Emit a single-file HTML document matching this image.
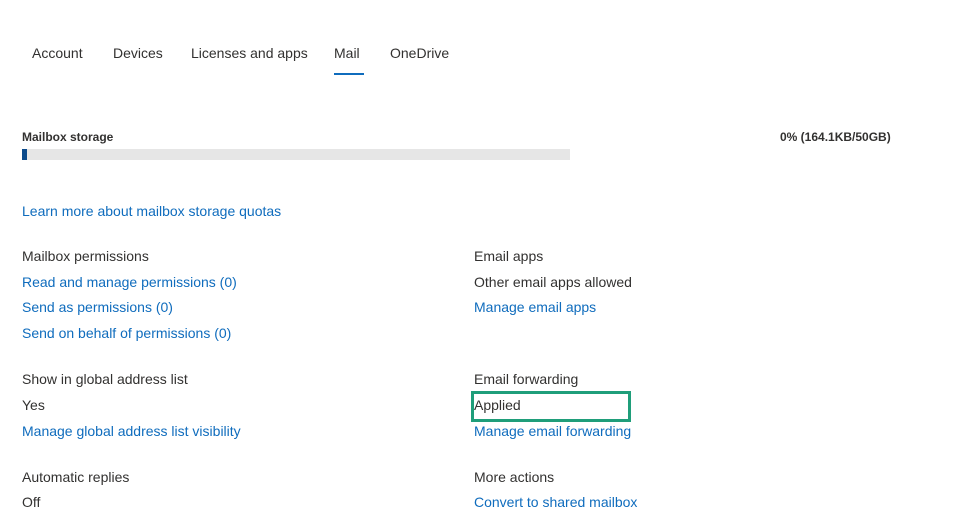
<!DOCTYPE html>
<html><head><style>
body{margin:0;width:964px;height:522px;background:#fff;position:relative;overflow:hidden;font-family:"Liberation Sans",sans-serif;font-size:14px;color:#323130}
.t{position:absolute;white-space:nowrap;line-height:18px}
.l{color:#0f6cbd}
.b{font-weight:bold;font-size:12px}
</style></head><body>
<div class="t" style="left:32px;top:44px">Account</div>
<div class="t" style="left:113px;top:44px">Devices</div>
<div class="t" style="left:191px;top:44px">Licenses and apps</div>
<div class="t" style="left:334px;top:44px">Mail</div>
<div class="t" style="left:390px;top:44px">OneDrive</div>
<div style="position:absolute;left:334px;top:73px;width:30px;height:2px;background:#0f6cbd"></div>
<div class="t b" style="left:22px;top:128px">Mailbox storage</div>
<div class="t b" style="left:780px;top:128px">0% (164.1KB/50GB)</div>
<div style="position:absolute;left:22px;top:149px;width:548px;height:11px;background:#e6e6e6"></div>
<div style="position:absolute;left:22px;top:149px;width:5px;height:11px;background:#0b4a8b"></div>
<div class="t l" style="left:22px;top:202px">Learn more about mailbox storage quotas</div>
<div class="t" style="left:22px;top:247px">Mailbox permissions</div>
<div class="t l" style="left:22px;top:273px">Read and manage permissions (0)</div>
<div class="t l" style="left:22px;top:298px">Send as permissions (0)</div>
<div class="t l" style="left:22px;top:324px">Send on behalf of permissions (0)</div>
<div class="t" style="left:22px;top:370px">Show in global address list</div>
<div class="t" style="left:22px;top:396px">Yes</div>
<div class="t l" style="left:22px;top:422px">Manage global address list visibility</div>
<div class="t" style="left:22px;top:468px">Automatic replies</div>
<div class="t" style="left:22px;top:493px">Off</div>
<div class="t" style="left:474px;top:247px">Email apps</div>
<div class="t" style="left:474px;top:273px">Other email apps allowed</div>
<div class="t l" style="left:474px;top:298px">Manage email apps</div>
<div class="t" style="left:474px;top:370px">Email forwarding</div>
<div class="t" style="left:474px;top:396px">Applied</div>
<div class="t l" style="left:474px;top:422px">Manage email forwarding</div>
<div class="t" style="left:474px;top:468px">More actions</div>
<div class="t l" style="left:474px;top:493px">Convert to shared mailbox</div>
<div style="position:absolute;left:471px;top:391px;width:154px;height:25px;border:3px solid #1f9e7a"></div>
</body></html>
